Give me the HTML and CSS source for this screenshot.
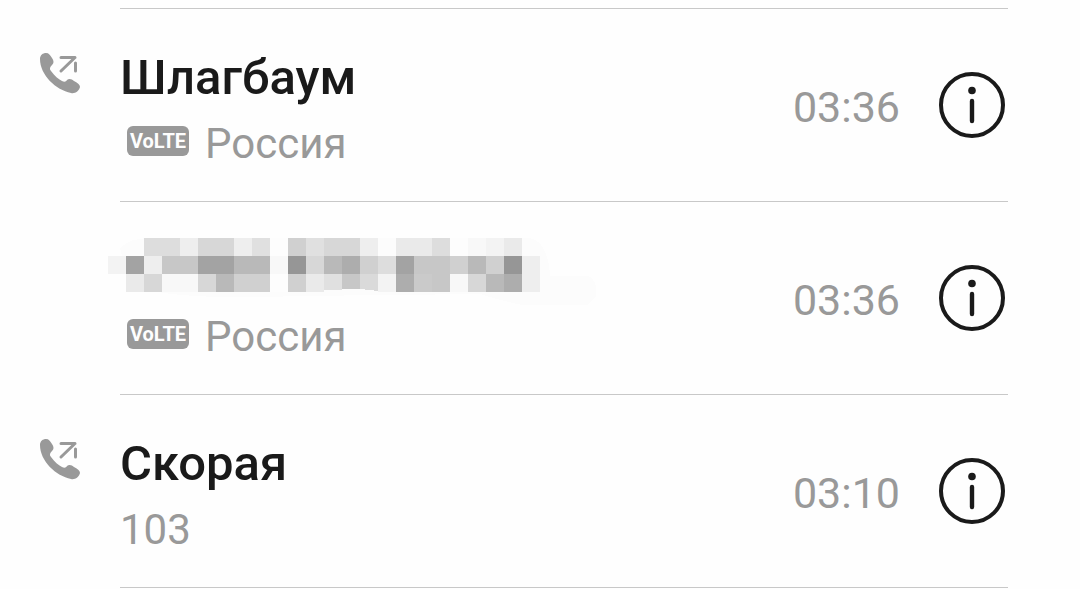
FILE: index.html
```html
<!DOCTYPE html>
<html lang="ru">
<head>
<meta charset="utf-8">
<meta name="viewport" content="width=device-width, initial-scale=1">
<title>Вызовы</title>
<link rel="stylesheet" href="styles.css">
</head>
<body>
<svg class="sprite" aria-hidden="true">
  <symbol id="outgoing" viewBox="0 0 42 42">
    <path fill="#999" d="M1 6C1 2 4 0 7 0C10 0 11 2 13 5C15 8 15 10 13 12C11 14 10 16 12 18C16 23 19 26 23 28C25 29 27 29 28 27C30 25 33 26 35 28C39 30 41 32 41 34C40 38 36 41 32 40C17 37 1 22 1 6Z"/>
    <path fill="none" stroke="#999" stroke-width="3" stroke-linecap="round" d="M22 4.500H36M36 4.500L22 18M36.500 10V18"/>
  </symbol>
  <symbol id="info" viewBox="0 0 66 66">
    <circle cx="33" cy="33" r="31" fill="none" stroke="#1a1a1a" stroke-width="4"/>
    <circle cx="33" cy="18.500" r="3.800" fill="#1a1a1a"/>
    <path stroke="#1a1a1a" stroke-width="4.400" stroke-linecap="round" d="M33 29V49"/>
  </symbol>
</svg>
<main>
  <ul class="calls">
    <li class="call">
      <svg class="direction" role="img" aria-label="Исходящий"><use href="#outgoing"/></svg>
      <div class="entry">
        <div class="caller">
          <h2 class="name">Шлагбаум</h2>
          <p class="detail"><span class="badge">VoLTE</span>Россия</p>
        </div>
        <time class="time">03:36</time>
        <button class="info" type="button" aria-label="Подробнее"><svg><use href="#info"/></svg></button>
      </div>
    </li>
    <li class="call">
      <span class="direction"></span>
      <div class="entry">
        <div class="caller">
          <div class="name">
            <svg class="mosaic" viewBox="0 2 490 72" role="img" aria-label="Имя скрыто" shape-rendering="crispEdges">
              <path fill="#fcfcfc" d="M12 12Q22 2 42 2H420Q440 4 442 40H480Q490 44 488 60L480 69H414Q390 64 372 58L190 60Q70 65 22 50Z"/>
              <path fill="#ddd" d="M36 2h36v18h-36zM324 2h18v18h-18zM270 20h18v18h-18z"/>
              <path fill="#eee" d="M72 2h18v18h-18zM126 2h18v18h-18zM36 20h18v18h-18zM252 2h18v18h-18zM414 20h18v36h-18z"/>
              <path fill="#d7d7d7" d="M90 2h36v18h-36zM36 38h18v18h-18zM198 20h18v18h-18zM216 2h36v18h-36zM90 38h18v18h-18zM360 38h18v18h-18z"/>
              <path fill="#e0e0e0" d="M144 2h18v18h-18zM198 2h18v18h-18zM216 38h18v16h-18z"/>
              <path fill="#f3f3f3" d="M0 20h18v18H0zM378 2h18v18h-18zM270 38h18v18h-18z"/>
              <path fill="#eaeaea" d="M18 38h18v18h-18zM198 38h18v18h-18zM288 2h36v18h-36zM396 2h18v18h-18z"/>
              <path fill="#f8f8f8" d="M54 38h36v18h-36zM162 20h18v18h-18zM360 2h18v18h-18zM342 38h18v18h-18z"/>
              <path fill="#fdfdfd" d="M162 2h18v18h-18zM162 38h18v18h-18zM342 2h18v18h-18z"/>
              <path fill="#d0d0d0" d="M126 38h36v18h-36zM180 2h18v18h-18zM180 38h18v18h-18zM252 20h18v18h-18zM342 20h18v18h-18zM378 20h18v18h-18z"/>
              <path fill="#c7c7c7" d="M54 20h36v18h-36zM234 38h18v15h-18zM306 20h36v18h-36zM324 38h18v18h-18z"/>
              <path fill="#cacaca" d="M306 38h18v18h-18z"/>
              <path fill="#b9b9b9" d="M126 20h36v18h-36zM108 38h18v18h-18zM216 20h18v18h-18zM360 20h18v18h-18zM378 38h18v18h-18z"/>
              <path fill="#adadad" d="M234 20h18v18h-18zM288 38h18v18h-18zM396 38h18v18h-18z"/>
              <path fill="#a3a3a3" d="M18 20h18v18h-18zM90 20h36v18h-36zM288 20h18v18h-18z"/>
              <path fill="#969696" d="M180 20h18v18h-18zM396 20h18v18h-18z"/>
              <path fill="#dadada" d="M252 38h18v17l-18-2z"/>
            </svg>
          </div>
          <p class="detail"><span class="badge">VoLTE</span>Россия</p>
        </div>
        <time class="time">03:36</time>
        <button class="info" type="button" aria-label="Подробнее"><svg><use href="#info"/></svg></button>
      </div>
    </li>
    <li class="call">
      <svg class="direction" role="img" aria-label="Исходящий"><use href="#outgoing"/></svg>
      <div class="entry">
        <div class="caller">
          <h2 class="name">Скорая</h2>
          <p class="detail">103</p>
        </div>
        <time class="time">03:10</time>
        <button class="info" type="button" aria-label="Подробнее"><svg><use href="#info"/></svg></button>
      </div>
    </li>
  </ul>
</main>
</body>
</html>
```
FILE: styles.css
```css
* {
  box-sizing: border-box;
}

body {
  margin: 0;
  background: #fefefe;
  color: #1a1a1a;
  font-family: Roboto, "Noto Sans", sans-serif;
}

.sprite {
  position: absolute;
  width: 0;
  height: 0;
}

.calls {
  list-style: none;
  margin: 0;
  padding: 8px 72px 0 39px;
}

.call {
  display: grid;
  grid-template-columns: 42px 1fr;
  column-gap: 39px;
}

.direction {
  width: 42px;
  height: 42px;
  margin-top: 45px;
}

.entry {
  display: flex;
  align-items: center;
  border-top: 1px solid #c8c8c8;
  padding-right: 3px;
}

.call:last-child .entry {
  border-bottom: 1px solid #c8c8c8;
}

.caller {
  flex: 1;
  padding: 36px 0 24px;
}

.name {
  margin: 0;
  height: 66px;
  font-size: 49px;
  line-height: 66px;
  font-weight: 500;
}

.mosaic {
  display: block;
  width: 490px;
  height: 72px;
  margin-left: -12px;
}

.detail {
  display: flex;
  align-items: center;
  gap: 16px;
  margin: 0;
  font-size: 42px;
  line-height: 66px;
  font-weight: 400;
  color: #999;
}

.badge {
  width: 62px;
  height: 30px;
  margin: 0 0 6px 7px;
  border-radius: 6px;
  background: #999;
  color: #fefefe;
  font-size: 20px;
  line-height: 30px;
  font-weight: 700;
  text-align: center;
}

.time {
  margin-right: 39px;
  padding-top: 4px;
  color: #999;
  font-size: 43px;
  line-height: 60px;
  font-weight: 400;
}

.info {
  width: 66px;
  height: 66px;
  padding: 0;
  border: 0;
  background: none;
  cursor: pointer;
}

.info svg {
  display: block;
  width: 66px;
  height: 66px;
}
```
